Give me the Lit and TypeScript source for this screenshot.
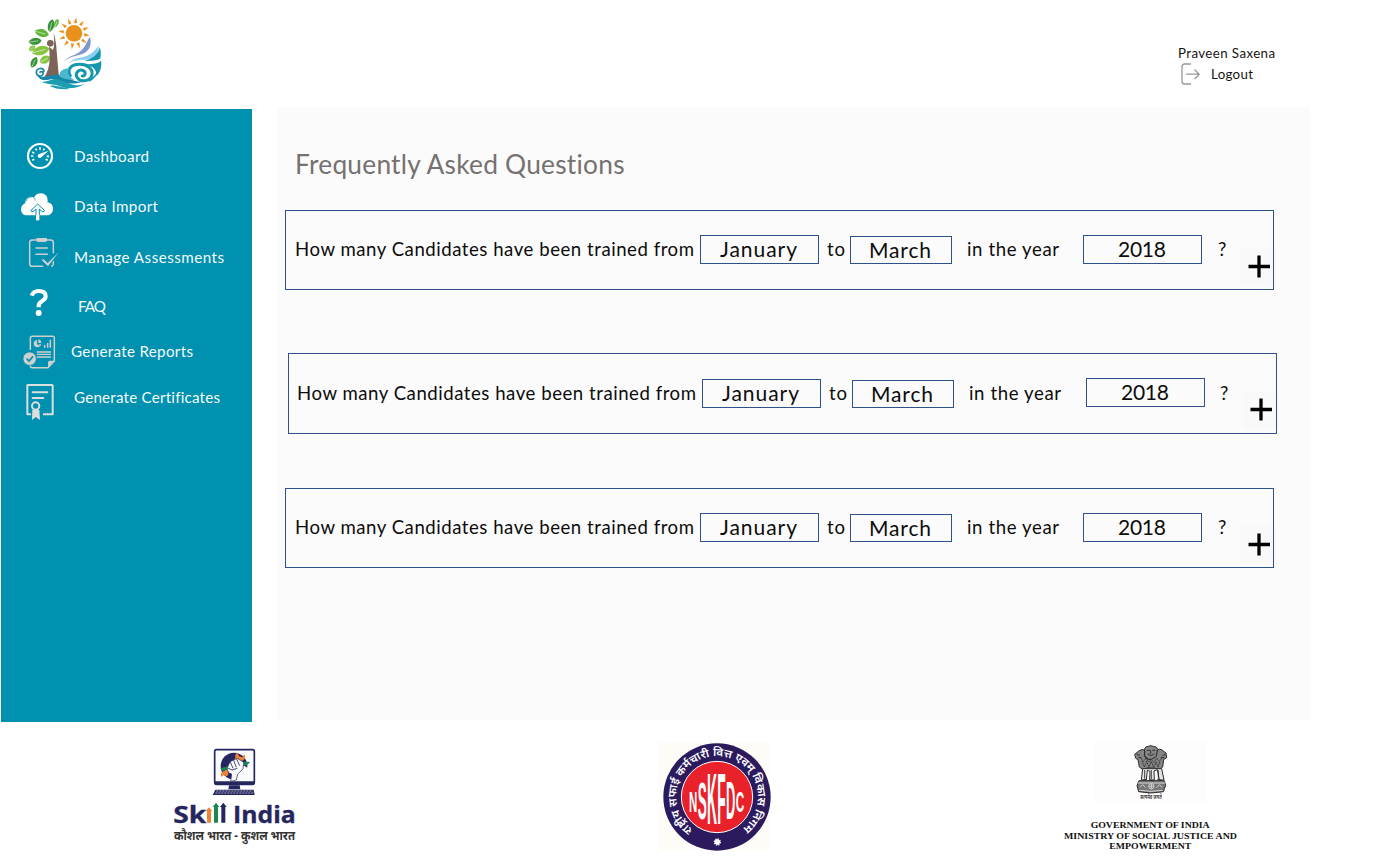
import { LitElement, html, svg, css } from "lit";
import { customElement, property } from "lit/decorators.js";
import { classMap } from "lit/directives/class-map.js";

/** A single line of text tracked out to a given width. */
@customElement("fit-text")
class FitText extends LitElement {
  @property({ type: Number }) width = 100;
  @property() text = "";
  static styles = css`
    :host { display: block; white-space: nowrap; flex: none; }
    span { display: inline-block; white-space: pre; }
  `;
  firstUpdated() {
    const el = this.renderRoot.querySelector("span") as HTMLElement;
    const natural = el.getBoundingClientRect().width;
    el.style.letterSpacing = (this.width - natural) / Math.max(1, this.text.length - 1) + "px";
    this.style.width = this.width + "px";
  }
  render() {
    return html`<span>${this.text}</span>`;
  }
}

const dashboardIcon = svg`
  <circle cx="120" cy="168" r="36" fill="none" stroke="#fff" stroke-width="6.500"/>
  <g stroke="#fff" stroke-width="5">
    <path d="M120 142v7M107 146l3 5M133 146l-3 5M97 156l6 4M93 168h7M97 181l6-3M143 181l-6-3M147 169h-7"/>
  </g>
  <path d="M115 163l31-11-22 20z" fill="#fff"/><circle cx="119" cy="168" r="6" fill="#fff"/>`;

const importIcon = svg`
  <path d="M79 346c-10 0-16-8-16-18 0-9 6-16 13-18-1-11 6-19 16-20 4 0 7 1 10 3 4-9 11-13 20-13 13 0 21 9 21 22 0 2 0 3-1 5 11 1 17 9 17 19 0 12-8 20-18 20z" fill="#fff"/>
  <path d="M79 303c1-8 8-13 16-11M101 293c3 3 4 6 4 9" fill="none" stroke="#0090b0" stroke-width="2"/>
  <path d="M93 331l20-19 20 19q1 6-6 4l-9-8v22h-10v-22l-9 8q-7 1-6-4z" fill="#fff" stroke="#0090b0" stroke-width="3" stroke-linejoin="round"/>
  <path d="M108 344h10v17h-10z" fill="#fff"/>`;

const assessmentIcon = svg`
  <g fill="none" stroke="#cfcfcf" stroke-width="4.500" stroke-linecap="round" stroke-linejoin="round">
    <path d="M108 420H97q-8 0-8 8v63q0 8 8 8h31M142 420h10q8 0 8 8v30"/>
    <path d="M160 485v6q0 5-5 8"/><path d="M108 444h34M108 463h34"/>
  </g>
  <path d="M109 414h32v7q0 5-5 5h-22q-5 0-5-5z" fill="#cfcfcf"/>
  <path d="M124 479l7-1 12 11 33-32-32 42z" fill="#cfcfcf"/>`;

const faqIcon = svg`
  <path d="M95 77q5-14 21-14 21 0 21 16c0 15-21 13-21 28v5" fill="none" stroke="#fff" stroke-width="12.500"/>
  <circle cx="116" cy="129" r="9" fill="#fff"/>`;

const reportIcon = svg`
  <g fill="none" stroke="#cfcfcf" stroke-width="4.500" stroke-linejoin="round">
    <path d="M91 240v-35q0-6 6-6h61q5 0 5 6v68l-19 20H97q-6 0-6-6v-3"/>
    <path d="M110 246h43M110 253h43M110 261h43" stroke-width="4"/>
    <path d="M134 233v-8M143 233v-14M151 233v-24" stroke-width="4.500"/>
  </g>
  <path d="M144 293v-16q0-5 5-5h14z" fill="#cfcfcf"/>
  <path d="M111 223v-13a11 11 0 1 0 10 17z" fill="#cfcfcf"/><path d="M115 208a12 12 0 0 1 9 11h-9zM116 223h8l-3 6z" fill="#cfcfcf"/>
  <circle cx="89" cy="266" r="20" fill="#cfcfcf" stroke="#0090b0" stroke-width="2"/>
  <path d="M80 266l7 7 12-14" fill="none" stroke="#0090b0" stroke-width="5"/>`;

const certificateIcon = svg`
  <g fill="none" stroke="#dedede" stroke-width="6" stroke-linejoin="round">
    <path d="M93 433H82v-87q0-1 2-1h72q2 0 2 2v86h-29"/>
    <path d="M98 367h44M98 384h32" stroke-linecap="round" stroke-width="6"/>
    <circle cx="107" cy="408" r="11"/>
  </g>
  <path d="M97 420h21l2 30-13-9-11 9z" fill="#dedede"/>`;

const leaves: [number, number, number, number, number, string][] = [
  [93, 47, 9, 20, 14, "#36933a"], [109, 40, 6, 14, 22, "#5fb53a"],
  [65, 69, 11, 22, 105, "#5fb53a"], [45, 94, 10, 20, 82, "#36933a"],
  [36, 115, 7, 12, 50, "#87c540"], [62, 122, 13, 27, 75, "#87c540"],
  [42, 157, 9, 18, 25, "#36933a"], [75, 149, 11, 18, 62, "#87c540"],
];

const brandLogo = svg`
  <g fill="#e8921c"><circle cx="162" cy="70" r="25"/>
    ${Array.from({ length: 12 }, (_, i) => svg`<path d="M157 39l5-17 5 17z" transform="rotate(${i * 30 + 8} 162 70)"/>`)}
  </g>
  ${leaves.map(([x, y, a, b, r, fill]) => svg`
    <g transform="translate(${x} ${y}) rotate(${r})">
      <path d="M0 ${-b}C${a * 1.5} ${-b / 2} ${a * 1.3} ${b / 2} 0 ${b}C${-a * 1.3} ${b / 2} ${-a * 1.5} ${-b / 2} 0 ${-b}" fill=${fill}/>
      <path d="M0 ${b}V${-b / 2}" stroke="#fff" stroke-width="1.500"/>
    </g>`)}
  <path d="M101 68q5 15 8 42 4 52 8 92H73q15-24 16-54 0-24-2-38l12 10q6-17 2-52z" fill="#7c6259"/>
  <circle cx="91" cy="100" r="10" fill="#7c6259"/>
  <path d="M129 157c20-24 40-19 57-38 13-14 14-25 24-39 8 31-7 48-32 55-20 5-34 8-49 22z" fill="#8097ce"/>
  <path d="M144 162c22-25 47-15 67-30 13-10 18-16 25-25 1 30-16 42-41 42-22 0-34 2-51 13z" fill="#8ccdf0"/>
  <path d="M243 152c-8 10-30 9-57 13 26-2 44 9 44 33 11-13 16-28 13-46z" fill="#1397ad"/>
  <path d="M240 112q-8 32-47 41 40 1 48-8 3-12-1-33z" fill="#1397ad"/>
  <path d="M151 197c-11-18 2-34 26-34 26-1 42 14 39 31-3 20-35 25-45 8-7-13 6-26 19-20 9 5 6 16-3 16" fill="none" stroke="#1397ad" stroke-width="9" stroke-linecap="round"/>
  <path d="M234 183q-7 18-26 30" fill="none" stroke="#1397ad" stroke-width="5"/>
  <path d="M72 184c0-13-23-11-23 3 0 11 15 15 20 6 3-7-5-11-9-6" fill="none" stroke="#1685a8" stroke-width="5" stroke-linecap="round"/>
  <path d="M50 190c10 20 35 4 61 4 30 1 40 22 77 21-29 10-57 5-73-3-21-10-30 1-49-3-9-3-14-9-16-19z" fill="#1685a8"/>
  <path d="M118 199c-2-17 20-28 30-22-10 9-1 24 15 32-18 2-34-2-45-10z" fill="#49b8cd"/>
  <path d="M65 215c25 2 32-13 53-6 29 12 49 22 76 13-37 21-67 10-79 5-17-7-27-1-50-12zM90 228c15-5 28 5 61 8-23 5-46 0-61-8z" fill="#1c9db0"/>`;

const skillLogo = svg`
  <rect x="164" y="29" width="119" height="102" rx="5" fill="#f9fbfc" stroke="#25265e" stroke-width="5"/>
  <path d="M162 124h123v6q0 6-7 6H169q-7 0-7-6z" fill="#25265e"/>
  <circle cx="222" cy="78" r="40" fill="#25265e"/>
  <path d="M214 114l33-40 27 16-8 26-34 5z" fill="#f9fbfc"/>
  <path d="M193 101l44-52" stroke="#ef8234" stroke-width="10"/>
  <path d="M233 38l4 11 11 3 5-10q7 14-6 20l-12 1-8-8q-5-12 6-17z" fill="#ef8234"/>
  <path d="M191 94q-12 4-7 17l8-7 7 5q10-5 4-13z" fill="#ef8234"/>
  <path d="M181 85l77-20 13 1-10 9-74 18z" fill="#1c8850"/>
  <path d="M202 83l8-18 22-10 19 12-2 20-16 15-4 18-17 4 3-22q-15-4-13-19z" fill="#f9fbfc" stroke="#25265e" stroke-width="2"/>
  <path d="M211 66l8 19m2-24l8 21m1-25l9 20M204 84l12 6 16-5" fill="none" stroke="#25265e" stroke-width="2.500"/>
  <path d="M207 136h32l2 12h-36z" fill="#25265e"/>
  <path d="M166 149h115l3 16H158z" fill="#25265e"/>
  <path d="M169 153h109M166 159h114" stroke="#eceaf2" stroke-width="2" stroke-dasharray="6 3"/>
  <g fill="#25265e" font-family="Open Sans, sans-serif" font-weight="700" font-size="71">
    <text x="40" y="248" textLength="99" lengthAdjust="spacingAndGlyphs" stroke="#25265e">Sk</text>
    <text x="219" y="248" textLength="188" lengthAdjust="spacingAndGlyphs" stroke="#25265e">India</text>
  </g>
  <path d="M141 248v-34h-4l10-12 10 12h-4v34z" fill="#ef8234"/>
  <path d="M162 248v-47h-4l10-13 10 13h-4v47z" fill="#1c8850"/>
  <path d="M184 248v-47h-4l10-13 10 13h-4v47z" fill="#25265e"/>
  <text x="42" y="301" textLength="363" lengthAdjust="spacingAndGlyphs" font-family="Noto Sans, Noto Sans Devanagari, sans-serif" font-weight="700" font-size="37" fill="#333">कौशल भारत - कुशल भारत</text>`;

/* letter, left, top, baseline, horizontal stretch */
const sealLetters: [string, number, number, number, number][] = [
  ["N", 117, 170, 231, 1.15], ["S", 143, 142, 252, 1.36], ["K", 171, 116, 268, 1.38],
  ["F", 202, 116, 268, 1.38], ["D", 228, 138, 252, 1.3], ["C", 257, 168, 230, 1.18],
];

const sealLogo = svg`
  <rect x="27" y="22" width="332" height="324" fill="#fdfcf7"/>
  <circle cx="201" cy="186" r="161" fill="#2b1b5e"/>
  <circle cx="201" cy="186" r="107" fill="#e8212a" stroke="#fff" stroke-width="3"/>
  <g fill="#fff" font-family="Liberation Sans, sans-serif" font-weight="700" font-size="30">
    ${sealLetters.map(([ch, x, top, bottom, sx]) => svg`
      <text transform="translate(${x} ${bottom}) scale(${sx} ${(bottom - top) / 21})">${ch}</text>`)}
  </g>
  <path id="ring" d="M129 284A122 122 0 1 1 273 284" fill="none"/>
  <text font-family="Noto Sans, Noto Sans Devanagari, sans-serif" font-weight="600" font-size="34" fill="#fff">
    <textPath href="#ring" textLength="606" lengthAdjust="spacingAndGlyphs">राष्ट्रीय सफाई कर्मचारी वित्त एवम् विकास निगम</textPath>
  </text>
  <circle cx="202" cy="321" r="8" fill="#fff"/>
  <circle cx="202" cy="321" r="9" fill="none" stroke="#fff" stroke-width="4" stroke-dasharray="4 3"/>`;

const emblem = svg`
  <rect x="134" y="22" width="333" height="186" fill="#fdfdfd"/>
  <g fill="#858585" stroke="#2c2c2c" stroke-width="3" stroke-linejoin="round">
    <path d="M284 41q2-7 11-7 8-4 15 0 11 0 13 9l-1 20-11 10h-16l-11-11z"/>
    <path d="M284 45q-10-4-18 3l-12 10 3 12 7 4 4 22 11 8 11-5h24l11 6 13-9 3-22 9-6-2-14-12-9q-8-5-14 0l-3 19-14 9h-12l-10-9z"/>
    <path d="M278 101l-4 34h15l3-29 8 3-1 27h14l-1-28 10-4 6 31h14l-7-34z" fill="#e4e4e4"/>
    <path d="M267 137h76l4 14-7 19q-36 8-74 0l-5-18z" fill="#777"/>
  </g>
  <g fill="none" stroke="#222" stroke-width="2.500">
    <path d="M291 46h9m7 0h9M293 57q10 9 20 0M302 46v10M260 58l10 3M346 58l-9 4M265 68h10M332 68h11"/>
    <path d="M276 78l7 18 7-17 7 18 7-18 7 18 7-17 6 17 6-18" stroke-dasharray="4 2"/>
    <path d="M272 68l8 12 8-11 8 13 8-8 8 8 8-13 8 11 8-12" stroke-dasharray="3 2"/>
    <path d="M284 105v26M304 105v28M325 106v25M280 134h8M299 135h13M321 134h11"/>
    <path d="M264 144h82M268 166q36 6 70 0" stroke="#ededed"/>
    <circle cx="304" cy="154" r="8" stroke="#ddd"/><path d="M296 154h16M304 146v16M270 157l8-8 9 9M320 158l8-9 9 8" stroke="#ddd"/>
  </g>
  <g fill="#222" font-family="Noto Sans, Noto Sans Devanagari, sans-serif" font-size="17" font-weight="600">
    <text x="271" y="192" textLength="64" lengthAdjust="spacingAndGlyphs">सत्यमेव जयते</text>
  </g>
  <g fill="#111" font-family="Liberation Serif, serif" font-weight="700" font-size="27">
    <text x="122" y="280" textLength="357" lengthAdjust="spacingAndGlyphs">GOVERNMENT OF INDIA</text>
    <text x="42" y="311" textLength="519" lengthAdjust="spacingAndGlyphs">MINISTRY OF SOCIAL JUSTICE AND</text>
    <text x="178" y="343" textLength="246" lengthAdjust="spacingAndGlyphs">EMPOWERMENT</text>
  </g>`;

const menu = [
  { label: "Dashboard", width: 75, row: "r50", box: "3 93 180 150", h: 50, icon: dashboardIcon, shift: "" },
  { label: "Data Import", width: 84, row: "r51", box: "3 243 180 153", h: 51, icon: importIcon, shift: "up" },
  { label: "Manage Assessments", width: 150, row: "r50", box: "3 396 180 150", h: 50, icon: assessmentIcon, shift: "" },
  { label: "FAQ", width: 28, row: "r49", box: "3 36 180 147", h: 49, icon: faqIcon, shift: "wide" },
  { label: "Generate Reports", width: 122, row: "r43", box: "3 183 180 129", h: 43, icon: reportIcon, shift: "narrow" },
  { label: "Generate Certificates", width: 146, row: "r47", box: "3 312 180 141", h: 47, icon: certificateIcon, shift: "up" },
];

@customElement("question-card")
class QuestionCard extends LitElement {
  static styles = css`
    :host { display: flex; box-sizing: border-box; width: 989px; height: 80px; border: 1px solid #2f528f; color: #0c0c0c; font-size: 18.6px; line-height: 26px; padding-top: 25px; align-items: flex-start; }
    .lead { width: 405px; margin-left: 9px; }
    .field { box-sizing: border-box; height: 29px; border: 1px solid #2f528f; font-size: 21px; line-height: 26px; display: flex; justify-content: center; flex: none; padding-right: 2px; }
    .from { width: 119px; margin-top: -1px; }
    .until { width: 102px; height: 28px; }
    .year { width: 119px; margin-top: -1px; line-height: 25px; padding-right: 1px; }
    .to { width: 23px; margin-left: 8px; }
    .in { width: 116px; margin-left: 15px; }
    .mark { width: 23px; margin-left: 16px; }
    .plus { flex: none; width: 35px; height: 38px; margin-top: 12px; background: #f9f9f9; position: relative; z-index: -1; }
    .lead, .to, .in, .mark { flex: none; }
    :host(.offset) { height: 81px; padding-top: 26px; }
    :host(.offset) .lead { margin-left: 8px; }
    :host(.offset) .in { width: 117px; }
    :host(.offset) .mark { margin-left: 15px; }
    :host(.offset) .field { line-height: 25px; }
    :host(.offset) .year { margin-top: -2px; }
    :host(.offset) .plus { margin-top: 11px; }
  `;
  render() {
    return html`
      <div class="lead"><fit-text width="399" text="How many Candidates have been trained from"></fit-text></div>
      <div class="field from"><fit-text width="77" text="January"></fit-text></div>
      <div class="to"><fit-text width="18" text="to"></fit-text></div>
      <div class="field until"><fit-text width="62" text="March"></fit-text></div>
      <div class="in"><fit-text width="92" text="in the year"></fit-text></div>
      <div class="field year"><fit-text width="48" text="2018"></fit-text></div>
      <div class="mark">?</div>
      <svg class="plus" viewBox="0 0 35 38"><path d="M7.500 18.500h21.500M18 7.500v22" stroke="#000" stroke-width="3.300"/></svg>`;
  }
}

@customElement("app-root")
class AppRoot extends LitElement {
  static styles = css`
    :host { display: flex; flex-direction: column; width: 1376px; height: 864px; background: #fff; overflow: hidden; font-family: Lato, sans-serif; }
    svg { display: block; flex: none; }
    header { height: 107px; box-sizing: border-box; display: flex; justify-content: space-between; padding: 10px 101px 0 20px; flex: none; }
    .user { width: 97px; padding-top: 33px; font-size: 13.3px; line-height: 20px; color: #151515; }
    .logout { display: flex; align-items: center; gap: 7px; margin-left: 2px; height: 21px; }
    .body { display: flex; gap: 25px; padding-left: 1px; flex: none; height: 615px; }
    aside { width: 251px; height: 613px; margin-top: 2px; background: #0090b0; box-sizing: border-box; padding-top: 22px; color: #f4fbfc; font-size: 15.2px; }
    .item { display: flex; align-items: center; gap: 13px; }
    .item.up fit-text { margin-bottom: 2px; }
    .item.wide { gap: 17px; }
    .item.wide fit-text { margin-bottom: 2px; }
    .item.narrow { gap: 10px; }
    .item.narrow fit-text { margin-bottom: 4px; }
    .r43 { height: 43px; } .r47 { height: 47px; } .r49 { height: 49px; } .r50 { height: 50px; } .r51 { height: 51px; }
    main { width: 1033px; height: 613px; background: #fbfbfb; box-sizing: border-box; padding: 39px 0 0 8px; position: relative; z-index: 0; }
    h1 { margin: 0 0 28px 10px; font-weight: 400; font-size: 26.3px; line-height: 36px; color: #767171; }
    .offset { margin: 63px 0 54px 3px; }
    footer { display: flex; padding: 13px 126px 0 160px; justify-content: space-between; align-items: flex-start; }
    .skill { margin-top: 5px; }
    .seal { margin-left: 70px; }
  `;
  render() {
    return html`
      <header>
        <svg width="90" height="90" viewBox="0 0 270 270">${brandLogo}</svg>
        <div class="user">
          <fit-text width="97" text="Praveen Saxena"></fit-text>
          <div class="logout">
            <svg width="24" height="24" viewBox="0 0 24 24" fill="none" stroke="#999" stroke-width="1.300">
              <path d="M11 2H4.500Q2 2 2 4.500V19Q2 22 4.500 22H11M6 12.200H19M14.500 7.500L19.200 12.200L14.500 17"/>
            </svg>
            <fit-text width="42" text="Logout"></fit-text>
          </div>
        </div>
      </header>
      <div class="body">
        <aside>
          ${menu.map((m) => html`
            <div class=${classMap({ item: true, [m.row]: true, up: m.shift === "up", wide: m.shift === "wide", narrow: m.shift === "narrow" })}>
              <svg width="60" height=${m.h} viewBox=${m.box}>${m.icon}</svg>
              <fit-text width=${m.width} text=${m.label}></fit-text>
            </div>`)}
        </aside>
        <main>
          <h1><fit-text width="330" text="Frequently Asked Questions"></fit-text></h1>
          <question-card></question-card>
          <question-card class="offset"></question-card>
          <question-card></question-card>
        </main>
      </div>
      <footer>
        <svg class="skill" width="150" height="115" viewBox="0 0 450 345">${skillLogo}</svg>
        <svg class="seal" width="130" height="125" viewBox="0 0 390 375">${sealLogo}</svg>
        <svg width="200" height="125" viewBox="0 0 600 375">${emblem}</svg>
      </footer>`;
  }
}
